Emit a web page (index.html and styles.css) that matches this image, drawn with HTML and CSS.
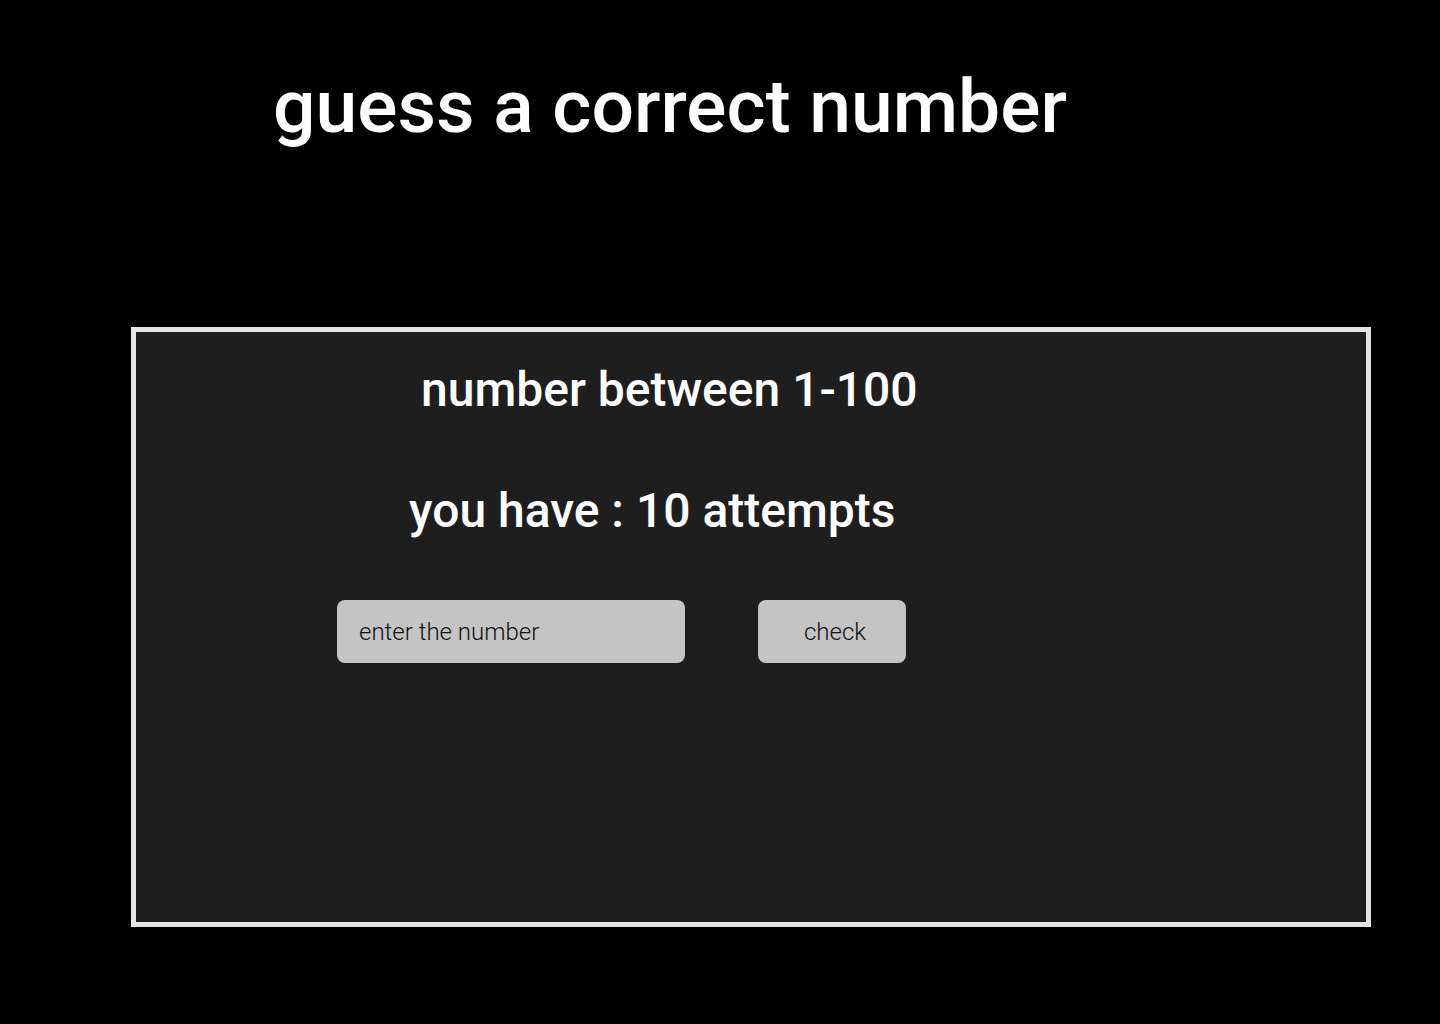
FILE: index.html
```html
<!DOCTYPE html>
<html>
<head>
<meta charset="utf-8">
<link rel="stylesheet" href="styles.css">
</head>
<body>
<h1 class="title">guess a correct number</h1>
<main class="card">
  <h2 class="range">number between 1-100</h2>
  <h2 class="attempts">you have : 10 attempts</h2>
  <div class="controls">
    <input class="guess" type="text" placeholder="enter the number">
    <button class="check">check</button>
  </div>
</main>
</body>
</html>
```
FILE: styles.css
```css
* { box-sizing: border-box; }
html, body { margin: 0; padding: 0; }
body {
  background: #000;
  width: 1440px;
  height: 1024px;
  font-family: Roboto, "Noto Sans", sans-serif;
  color: #fff;
  overflow: hidden;
}
.title {
  margin: 0;
  padding: 61px 0 0 273px;
  font-size: 75px;
  font-weight: 500;
  line-height: 90px;
}
.card {
  margin: 176px 0 0 131px;
  width: 1240px;
  height: 600px;
  border: 5px solid #e5e5e5;
  background: #1f1e1f;
  padding-top: 30px;
}
.range {
  margin: 0 0 0 285px;
  font-size: 48px;
  font-weight: 500;
  line-height: 56px;
}
.attempts {
  margin: 65px 0 0 273px;
  font-size: 48px;
  font-weight: 500;
  line-height: 56px;
}
.controls {
  display: flex;
  gap: 73px;
  margin: 61px 0 0 201px;
}
.guess {
  width: 348px;
  height: 63px;
  border: none;
  border-radius: 8px;
  background: #c4c4c4;
  padding: 0 22px;
  font-family: Roboto, sans-serif;
  font-weight: 300;
  font-size: 24px;
  color: #111;
  outline: none;
}
.guess::placeholder { color: #111; opacity: 1; }
.check {
  width: 148px;
  height: 63px;
  border: none;
  border-radius: 8px;
  background: #c4c4c4;
  font-family: Roboto, sans-serif;
  font-weight: 300;
  font-size: 24px;
  color: #111;
  padding: 0 0 0 6px;
}
```
